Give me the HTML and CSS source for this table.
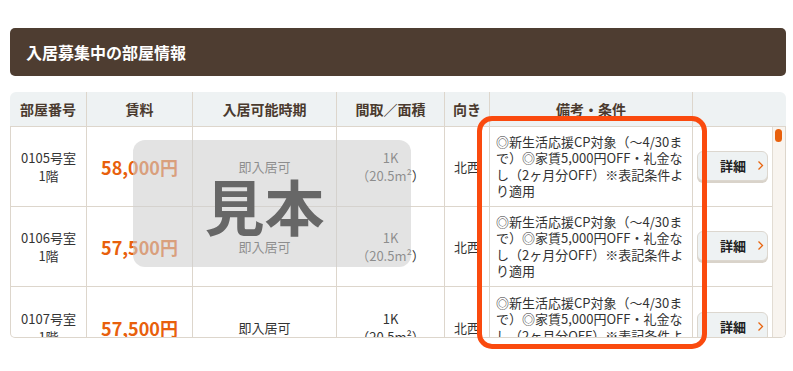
FILE: index.html
```html
<!DOCTYPE html>
<html lang="ja">
<head>
<meta charset="utf-8">
<title>入居募集中の部屋情報</title>
<link rel="stylesheet" href="styles.css">
</head>
<body>
<div class="page">
  <h2 class="title">入居募集中の部屋情報</h2>
  <div class="table-wrap">
    <div class="thead">
      <div class="th">部屋番号</div>
      <div class="th">賃料</div>
      <div class="th">入居可能時期</div>
      <div class="th">間取／面積</div>
      <div class="th">向き</div>
      <div class="th">備考・条件</div>
      <div class="th last"></div>
    </div>
    <div class="tbody">
      <div class="rows">
        <div class="row">
          <div class="td room">0105号室<br>1階</div>
          <div class="td price">58,000円</div>
          <div class="td">即入居可</div>
          <div class="td">1K<br>（20.5m²）</div>
          <div class="td">北西</div>
          <div class="td note">◎新生活応援CP対象（〜4/30まで）◎家賃5,000円OFF・礼金なし（2ヶ月分OFF）※表記条件より適用</div>
          <div class="td last"><a class="btn" href="#">詳細<svg width="7" height="11" viewBox="0 0 7 11"><polyline points="1.5,1.5 5.5,5.5 1.5,9.5" fill="none" stroke="#e8640f" stroke-width="1.3"/></svg></a></div>
        </div>
        <div class="row">
          <div class="td room">0106号室<br>1階</div>
          <div class="td price">57,500円</div>
          <div class="td">即入居可</div>
          <div class="td">1K<br>（20.5m²）</div>
          <div class="td">北西</div>
          <div class="td note">◎新生活応援CP対象（〜4/30まで）◎家賃5,000円OFF・礼金なし（2ヶ月分OFF）※表記条件より適用</div>
          <div class="td last"><a class="btn" href="#">詳細<svg width="7" height="11" viewBox="0 0 7 11"><polyline points="1.5,1.5 5.5,5.5 1.5,9.5" fill="none" stroke="#e8640f" stroke-width="1.3"/></svg></a></div>
        </div>
        <div class="row">
          <div class="td room">0107号室<br>1階</div>
          <div class="td price">57,500円</div>
          <div class="td">即入居可</div>
          <div class="td">1K<br>（20.5m²）</div>
          <div class="td">北西</div>
          <div class="td note">◎新生活応援CP対象（〜4/30まで）◎家賃5,000円OFF・礼金なし（2ヶ月分OFF）※表記条件より適用</div>
          <div class="td last"><a class="btn" href="#">詳細<svg width="7" height="11" viewBox="0 0 7 11"><polyline points="1.5,1.5 5.5,5.5 1.5,9.5" fill="none" stroke="#e8640f" stroke-width="1.3"/></svg></a></div>
        </div>
      </div>
      <div class="track"><div class="thumb"></div></div>
    </div>
    <div class="sample">見本</div>
    <div class="highlight"></div>
  </div>
</div>
</body>
</html>
```
FILE: styles.css
```css
* { box-sizing: border-box; }
html, body { margin: 0; padding: 0; background: #fff; }
html { height: 100%; }
body {
  min-height: 100%;
  font-family: "Noto Sans CJK JP", "Noto Sans", sans-serif;
  color: #333;
}
.page {
  padding: 28px 7px 30px 10px;
}
.title {
  margin: 0;
  height: 48px;
  background: #4e3d31;
  border-radius: 5px;
  color: #fff;
  font-size: 16px;
  font-weight: bold;
  line-height: 48px;
  padding-left: 16px;
}
.table-wrap {
  position: relative;
  margin-top: 16px;
  width: 776px;
}
.thead {
  display: grid;
  grid-template-columns: 77px 106px 144px 108px 45px 203px 1fr;
  height: 35px;
  background: #eef2f3;
  border-bottom: 1px solid #ddd6cc;
  border-radius: 6px 6px 0 0;
}
.th {
  border-right: 1px solid #ddd6cc;
  font-size: 14px;
  font-weight: bold;
  color: #4a3a2e;
  display: flex;
  align-items: center;
  justify-content: center;
}
.th.last { border-right: none; }
.tbody {
  display: flex;
  height: 211px;
  border: 1px solid #ddd6cc;
  border-top: none;
  border-radius: 0 0 5px 5px;
  overflow: hidden;
}
.rows {
  width: 761px;
  overflow: hidden;
}
.row {
  display: grid;
  grid-template-columns: 76px 106px 144px 108px 45px 203px 79px;
  height: 80px;
  border-bottom: 1px solid #ddd6cc;
}
.row:last-child { height: 82px; }
.td {
  border-right: 1px solid #ddd6cc;
  font-size: 13px;
  line-height: 18px;
  color: #333;
  display: flex;
  align-items: center;
  justify-content: center;
  text-align: center;
}
.td.last { border-right: none; }
.price {
  color: #e8600c;
  font-size: 18px;
  font-weight: bold;
}
.note {
  justify-content: flex-start;
  text-align: left;
  line-height: 16.5px;
  padding: 0 6px;
}
.btn {
  display: flex;
  align-items: center;
  gap: 11px;
  width: 71px;
  height: 30px;
  padding-left: 22px;
  background: #eef2f3;
  border: 1px solid #dcd7cf;
  border-radius: 6px;
  box-shadow: 0 2px 0 #d9d3ca;
  color: #222;
  font-size: 13px;
  font-weight: bold;
  text-decoration: none;
  margin-top: -2px;
}
.track {
  width: 13px;
  background: #f8f4ef;
  border-left: 1px solid #e2dcd3;
  padding: 2px 0 0 2px;
}
.thumb {
  width: 7px;
  height: 13px;
  background: #e8600c;
  border-radius: 4px;
}
.sample {
  position: absolute;
  left: 123px;
  top: 48px;
  width: 278px;
  height: 127px;
  border-radius: 12px;
  background: rgba(207, 207, 207, 0.58);
  color: #676767;
  font-size: 60px;
  font-weight: bold;
  display: flex;
  align-items: center;
  justify-content: center;
  padding-right: 15px;
  padding-top: 2px;
}
.highlight {
  position: absolute;
  left: 467px;
  top: 24px;
  width: 230px;
  height: 233px;
  border: 5px solid #fa4a0e;
  border-radius: 15px;
}
```
